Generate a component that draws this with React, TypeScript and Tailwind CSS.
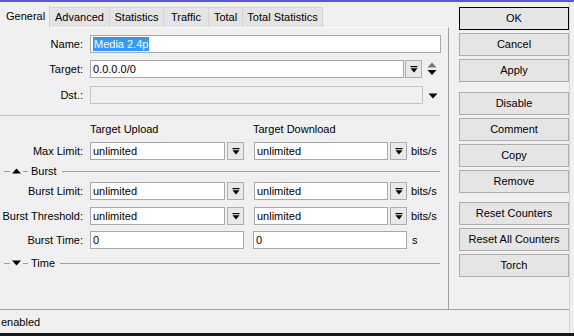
const tabs = [
  { label: 'General', w: 'w-[50px]', active: true },
  { label: 'Advanced', w: 'w-[60px]' },
  { label: 'Statistics', w: 'w-[54px]' },
  { label: 'Traffic', w: 'w-[45px]' },
  { label: 'Total', w: 'w-[34px]' },
  { label: 'Total Statistics', w: 'w-[80px]' },
];

const buttons = [
  { label: 'OK', mt: 'mt-0', def: true },
  { label: 'Cancel', mt: 'mt-[3px]' },
  { label: 'Apply', mt: 'mt-[3px]' },
  { label: 'Disable', mt: 'mt-[10px]' },
  { label: 'Comment', mt: 'mt-[3px]' },
  { label: 'Copy', mt: 'mt-[3px]' },
  { label: 'Remove', mt: 'mt-[3px]' },
  { label: 'Reset Counters', mt: 'mt-[9px]' },
  { label: 'Reset All Counters', mt: 'mt-[3px]' },
  { label: 'Torch', mt: 'mt-[3px]' },
];

function DropBtn() {
  return (
    <div className="w-[17px] h-[18px] border border-[#adadad] bg-[#e9e9e9] flex items-center justify-center shrink-0">
      <svg width="8" height="7" viewBox="0 0 8 7">
        <rect x="0.5" y="0" width="7" height="1.2" fill="#000" />
        <polygon points="0.5,2.2 7.5,2.2 4,6.5" fill="#000" />
      </svg>
    </div>
  );
}

function Field({ w, value }: { w: string; value: string }) {
  return (
    <div className={`${w} h-[18px] border border-[#a8a8a8] bg-white pl-[2px] leading-[16px] shrink-0`}>
      {value}
    </div>
  );
}

function Label({ text }: { text: string }) {
  return <div className="w-[83px] text-right shrink-0 whitespace-nowrap">{text}</div>;
}

function Section({ label, open }: { label: string; open?: boolean }) {
  return (
    <div className="flex items-center w-[440px] h-[12px]">
      <span className="w-[6px] h-px bg-[#a0a0a0] ml-[4px]" />
      <svg width="11" height="6" viewBox="0 0 11 6" className="mx-[1px]">
        {open ? (
          <polygon points="1,5.5 10,5.5 5.5,0.5" fill="#000" />
        ) : (
          <polygon points="1,0.5 10,0.5 5.5,5.5" fill="#000" />
        )}
      </svg>
      <span className="w-[5px] h-px bg-[#a0a0a0]" />
      <span className="ml-[3px] mr-[5px]">{label}</span>
      <span className="flex-1 h-px bg-[#a0a0a0]" />
    </div>
  );
}

function RateRow({ label, unit }: { label: string; unit: string }) {
  return (
    <div className="flex items-center h-[18px]">
      <Label text={label} />
      <div className="ml-[7px]">
        <Field w="w-[135px]" value="unlimited" />
      </div>
      <div className="ml-[2px]">
        <DropBtn />
      </div>
      <div className="ml-[10px]">
        <Field w="w-[134px]" value="unlimited" />
      </div>
      <div className="ml-[2px]">
        <DropBtn />
      </div>
      <span className="ml-[4px]">{unit}</span>
    </div>
  );
}

export default function App() {
  return (
    <div className="w-[574px] h-[336px] bg-[#f0f0f0] flex flex-col overflow-hidden text-[11px] text-black font-['Liberation_Sans',Arial,sans-serif]">
      <div className="h-[2px] bg-[#5a5ad0] shrink-0" />
      <div className="w-[570px] border-r border-[#d4d4d4] flex flex-col flex-1">
        <div className="flex h-[307px]">
          <div className="w-[450px] flex flex-col">
            <div className="flex items-end h-[22px] mt-[3px]">
              {tabs.map((t) =>
                t.active ? (
                  <div
                    key={t.label}
                    className={`${t.w} h-[23px] -mb-px bg-[#f0f0f0] border-r border-[#d0d0d0] pl-[6px] leading-[22px] relative z-10`}
                  >
                    {t.label}
                  </div>
                ) : (
                  <div
                    key={t.label}
                    className={`${t.w} h-[20px] bg-[#e4e4e4] border-t border-r border-[#d4d4d4] leading-[19px] text-center`}
                  >
                    {t.label}
                  </div>
                )
              )}
            </div>
            <div className="flex-1 border-t border-t-[#fbfbfb] border-r border-r-[#a0a0a0] pt-[7px]">
              <div className="flex items-center h-[18px]">
                <Label text="Name:" />
                <div className="ml-[7px] w-[351px] h-[18px] border border-[#a8a8a8] bg-white pl-[2px] flex items-center">
                  <span className="bg-[#3399ff] text-white leading-[14px] px-px">Media 2.4p</span>
                </div>
              </div>
              <div className="flex items-center h-[18px] mt-[7px]">
                <Label text="Target:" />
                <div className="ml-[7px]">
                  <Field w="w-[314px]" value="0.0.0.0/0" />
                </div>
                <div className="ml-px">
                  <DropBtn />
                </div>
                <svg width="10" height="14" viewBox="0 0 10 14" className="ml-[5px]">
                  <polygon points="0.5,5.5 9.5,5.5 5,0.5" fill="#7a7a7a" />
                  <polygon points="0.5,8 9.5,8 5,13" fill="#000" />
                </svg>
              </div>
              <div className="flex items-center h-[18px] mt-[8px]">
                <Label text="Dst.:" />
                <div className="ml-[7px] w-[333px] h-[18px] border border-[#c4c4c4] bg-[#f0f0f0]" />
                <svg width="10" height="6" viewBox="0 0 10 6" className="ml-[5px] mt-[2px]">
                  <polygon points="0.5,0.5 9.5,0.5 5,5.5" fill="#000" />
                </svg>
              </div>
              <div className="w-[440px] h-px bg-[#c4c4c4] mt-[11px]" />
              <div className="flex h-[14px] mt-[6px] leading-[14px]">
                <span className="ml-[90px] w-[163px]">Target Upload</span>
                <span>Target Download</span>
              </div>
              <div className="mt-[6px]">
                <RateRow label="Max Limit:" unit="bits/s" />
              </div>
              <div className="mt-[5px]">
                <Section label="Burst" open />
              </div>
              <div className="mt-[5px]">
                <RateRow label="Burst Limit:" unit="bits/s" />
              </div>
              <div className="mt-[7px]">
                <RateRow label="Burst Threshold:" unit="bits/s" />
              </div>
              <div className="flex items-center h-[18px] mt-[6px]">
                <Label text="Burst Time:" />
                <div className="ml-[7px]">
                  <Field w="w-[154px]" value="0" />
                </div>
                <div className="ml-[9px]">
                  <Field w="w-[154px]" value="0" />
                </div>
                <span className="ml-[5px]">s</span>
              </div>
              <div className="mt-[8px]">
                <Section label="Time" />
              </div>
            </div>
          </div>
          <div className="w-[120px] pl-[10px] pt-[5px] flex flex-col">
            {buttons.map((b) => (
              <div
                key={b.label}
                className={`${b.mt} w-[110px] h-[23px] flex items-center justify-center bg-[#e5e5e5] border ${
                  b.def ? 'border-black' : 'border-[#adadad]'
                }`}
              >
                {b.label}
              </div>
            ))}
          </div>
        </div>
        <div className="flex-1 border-t border-[#a0a0a0] flex items-center pl-px pt-[2px]">enabled</div>
      </div>
      <div className="h-[3px] bg-[#1a1a1a] shrink-0" />
    </div>
  );
}
